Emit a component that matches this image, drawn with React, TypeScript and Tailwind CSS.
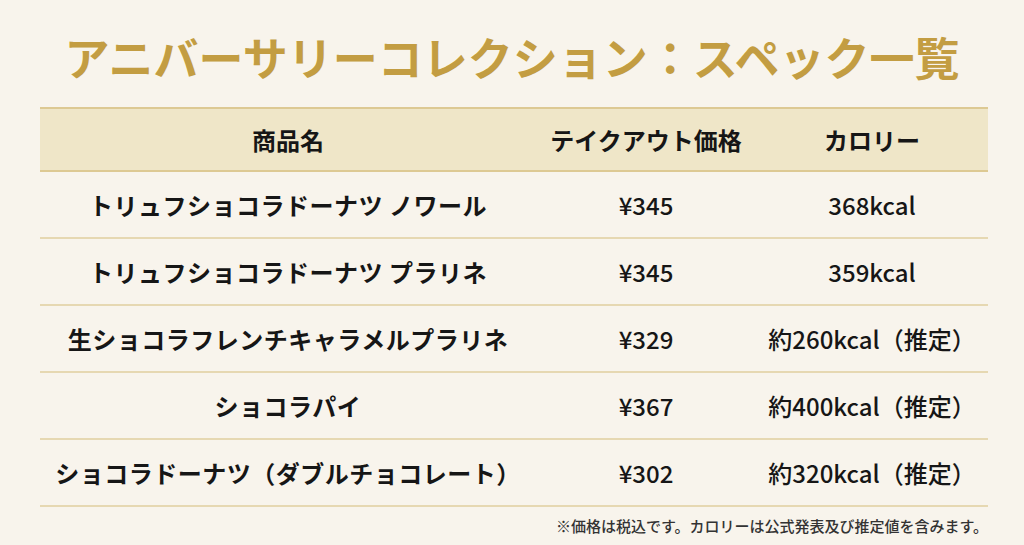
const rows = [
  { name: "トリュフショコラドーナツ ノワール", price: "¥345", kcal: "368kcal" },
  { name: "トリュフショコラドーナツ プラリネ", price: "¥345", kcal: "359kcal" },
  { name: "生ショコラフレンチキャラメルプラリネ", price: "¥329", kcal: "約260kcal（推定）" },
  { name: "ショコラパイ", price: "¥367", kcal: "約400kcal（推定）" },
  { name: "ショコラドーナツ（ダブルチョコレート）", price: "¥302", kcal: "約320kcal（推定）" },
];

const jp = { fontFamily: '"Noto Sans CJK JP", "Noto Sans", sans-serif' };

export default function App() {
  return (
    <div className="w-[1024px] h-[545px] bg-[#f8f4ec] overflow-hidden" style={jp}>
      <div className="flex flex-col items-center pt-[32px]">
        <h1 className="text-[45px] leading-[49px] font-bold text-[#c39d42]">
          アニバーサリーコレクション：スペック一覧
        </h1>
      </div>

      <div className="mx-[40px] mt-[26px] w-[948px]">
        <table className="w-full border-collapse text-[#161616]">
          <thead>
            <tr className="bg-[#efe6c8] border-y-2 border-[#ddc993]">
              <th className="w-[496px] h-[63px] text-[24px] font-bold">商品名</th>
              <th className="w-[220px] h-[63px] text-[24px] font-bold">テイクアウト価格</th>
              <th className="h-[63px] text-[24px] font-bold">カロリー</th>
            </tr>
          </thead>
          <tbody>
            {rows.map((r) => (
              <tr key={r.name} className="border-b-2 border-[#e6d8b2]">
                <td className="h-[67px] text-center text-[24px] font-bold tracking-[0.5px]">{r.name}</td>
                <td className="h-[67px] text-center text-[24px] font-medium">{r.price}</td>
                <td className="h-[67px] text-center text-[24px] font-medium">{r.kcal}</td>
              </tr>
            ))}
          </tbody>
        </table>
        <div className="mt-[8px] text-right text-[15px] font-medium text-[#333]">
          ※価格は税込です。カロリーは公式発表及び推定値を含みます。
        </div>
      </div>
    </div>
  );
}
